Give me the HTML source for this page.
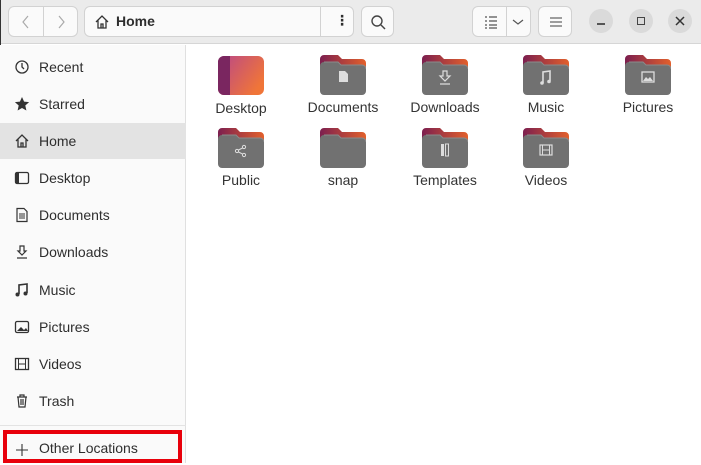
<!DOCTYPE html>
<html><head><meta charset="utf-8"><style>
*{margin:0;padding:0;box-sizing:border-box}
body{width:701px;height:463px;overflow:hidden;background:#fff;font-family:"Liberation Sans","DejaVu Sans",sans-serif;position:relative;color:#2e2e2e}
.hdr{position:absolute;left:0;top:0;width:701px;height:44px;background:#ebebeb;border-bottom:1px solid #d6d6d6}
.btn{position:absolute;background:#fafafa;border:1px solid #d2d2d2;border-radius:6px}
.side{position:absolute;left:0;top:45px;width:186px;height:418px;background:#fafafa;border-right:1px solid #e0e0e0}
.row{position:absolute;left:0;width:186px;height:36px;font-size:14px;line-height:36px}
.row span{position:absolute;left:39px}
.row svg{position:absolute;left:14px;top:10px}
.sel{background:#e3e3e3}
.item{position:absolute;width:100px;text-align:center;font-size:14px;color:#333}
.item svg{display:block;margin:0 auto 4px}
.wc{position:absolute;top:9px;width:24px;height:24px;border-radius:12px;background:#dadada}
</style></head><body>
<svg width="0" height="0" style="position:absolute"><defs>
<linearGradient id="g" x1="0" x2="1"><stop offset="0" stop-color="#7c1f4f"/><stop offset="1" stop-color="#e2602c"/></linearGradient>
<linearGradient id="d" x1="0" x2="1" y1="0" y2="0.6"><stop offset="0" stop-color="#b8468a"/><stop offset="1" stop-color="#f07538"/></linearGradient>
<symbol id="f" viewBox="0 0 46 41"><path d="M0 5a4 4 0 0 1 4-4h14l4 4h20a4 4 0 0 1 4 4v10H0z" fill="url(#g)"/><path d="M0 12a4 4 0 0 1 4-4h14l3 3h21a4 4 0 0 1 4 4v22a4 4 0 0 1-4 4H4a4 4 0 0 1-4-4z" fill="#717171"/><path d="M4 8h14l3 3h21a4 4 0 0 1 4 4" fill="none" stroke="#8a8a8a" stroke-width="1"/></symbol>
</defs></svg>
<div class="hdr"></div>
<div style="position:absolute;left:0;top:0;width:1px;height:463px;background:#333"></div>
<div class="btn" style="left:8px;top:6px;width:70px;height:31px"><div style="position:absolute;left:34px;top:0;width:1px;height:29px;background:#d2d2d2"></div>
<svg style="position:absolute;left:12px;top:8px" width="10" height="14"><path d="M7 1L2 7l5 6" fill="none" stroke="#aaa" stroke-width="1.2"/></svg>
<svg style="position:absolute;left:47px;top:8px" width="10" height="14"><path d="M3 1l5 6-5 6" fill="none" stroke="#aaa" stroke-width="1.2"/></svg></div>
<div class="btn" style="left:84px;top:6px;width:270px;height:31px"><div style="position:absolute;left:235px;top:0;width:1px;height:29px;background:#d2d2d2"></div>
<svg style="position:absolute;left:9px;top:7px" width="16" height="16"><path d="M2 8L8 2l6 6M4 6.5V14h8V6.5M7 14v-4h2v4" fill="none" stroke="#333" stroke-width="1.3"/></svg>
<span style="position:absolute;left:31px;top:6px;font-size:14px;font-weight:bold">Home</span>
<span style="position:absolute;left:250px;top:5px;font-size:14px;font-weight:bold">⋮</span></div>
<div class="btn" style="left:361px;top:6px;width:33px;height:31px"><svg style="position:absolute;left:8px;top:7px" width="16" height="16"><circle cx="7" cy="7" r="5" fill="none" stroke="#444" stroke-width="1.4"/><path d="M11 11l4 4" stroke="#444" stroke-width="1.5"/></svg></div>
<div class="btn" style="left:472px;top:6px;width:59px;height:31px"><div style="position:absolute;left:33px;top:0;width:1px;height:29px;background:#d2d2d2"></div>
<svg style="position:absolute;left:11px;top:8px" width="14" height="14"><path d="M1 2h2M1 6h2M1 10h2M1 13h2M5 2h8M5 6h8M5 10h8M5 13h8" stroke="#555" stroke-width="1.2"/></svg>
<svg style="position:absolute;left:39px;top:11px" width="12" height="8"><path d="M1 2l5 4 5-4" fill="none" stroke="#555" stroke-width="1.2"/></svg></div>
<div class="btn" style="left:538px;top:6px;width:34px;height:31px"><svg style="position:absolute;left:10px;top:9px" width="14" height="12"><path d="M1 2h12M1 6h12M1 10h12" stroke="#666" stroke-width="1.2"/></svg></div>
<div class="wc" style="left:589px"><div style="position:absolute;left:8px;top:14px;width:8px;height:1.5px;background:#555"></div></div>
<div class="wc" style="left:629px"><div style="position:absolute;left:8px;top:8px;width:8px;height:8px;border:1.3px solid #444"></div></div>
<div class="wc" style="left:668px"><svg style="position:absolute;left:7px;top:7px" width="10" height="10"><path d="M1 1l8 8M9 1l-8 8" stroke="#333" stroke-width="1.5"/></svg></div>

<div class="side">
<div class="row" style="top:4px"><svg width="16" height="16"><circle cx="8" cy="8" r="6" fill="none" stroke="#333" stroke-width="1.3"/><path d="M8 4v4l2 2" fill="none" stroke="#333" stroke-width="1.3"/></svg><span>Recent</span></div>
<div class="row" style="top:41px"><svg width="16" height="16"><path d="M8 1l2.1 4.6 5 .5-3.8 3.4 1.1 5L8 12l-4.4 2.5 1.1-5L.9 6.1l5-.5z" fill="#333"/></svg><span>Starred</span></div>
<div class="row sel" style="top:78px"><svg width="16" height="16"><path d="M2 8L8 2l6 6M4 6.5V14h8V6.5M7 14v-4h2v4" fill="none" stroke="#333" stroke-width="1.3"/></svg><span>Home</span></div>
<div class="row" style="top:115px"><svg width="16" height="16"><rect x="1.5" y="2.5" width="13" height="11" rx="1.5" fill="none" stroke="#333" stroke-width="1.3"/><rect x="2" y="3" width="3" height="10" fill="#333"/></svg><span>Desktop</span></div>
<div class="row" style="top:152px"><svg width="16" height="16"><path d="M3 1.5h7l3 3v10H3z" fill="none" stroke="#333" stroke-width="1.2"/><path d="M5 7h6M5 9h6M5 11h6" stroke="#333"/></svg><span>Documents</span></div>
<div class="row" style="top:189px"><svg width="16" height="16"><path d="M6 2h4v5h2l-4 4-4-4h2zM3 14h10" fill="none" stroke="#333" stroke-width="1.2"/></svg><span>Downloads</span></div>
<div class="row" style="top:227px"><svg width="16" height="16"><path d="M5 12V3l8-1v9" fill="none" stroke="#333" stroke-width="1.6"/><circle cx="3.5" cy="12.5" r="2" fill="#333"/><circle cx="11.5" cy="11.5" r="2" fill="#333"/></svg><span>Music</span></div>
<div class="row" style="top:264px"><svg width="16" height="16"><rect x="1.5" y="2.5" width="13" height="11" rx="1.5" fill="none" stroke="#333" stroke-width="1.3"/><path d="M3 12l4-4 3 3 2-2 2 3z" fill="#333"/></svg><span>Pictures</span></div>
<div class="row" style="top:301px"><svg width="16" height="16"><rect x="1.5" y="2.5" width="13" height="11" fill="none" stroke="#333" stroke-width="1.3"/><path d="M4.5 3v10M11.5 3v10M5 8h6" stroke="#333"/></svg><span>Videos</span></div>
<div class="row" style="top:338px"><svg width="16" height="16"><path d="M3 4h10M6 4V2h4v2M4 4l1 10h6l1-10M7 6v6M9 6v6" fill="none" stroke="#333" stroke-width="1.2"/></svg><span>Trash</span></div>
<div style="position:absolute;left:0;top:380px;width:186px;height:1px;background:#e3e3e3"></div>
<div class="row" style="top:386px;height:32px;line-height:34px"><svg width="16" height="16" style="top:11px"><path d="M8 2v12M2 8h12" stroke="#333" stroke-width="1.1"/></svg><span>Other Locations</span></div>
</div>
<div style="position:absolute;left:3px;top:430px;width:179px;height:33px;border:4px solid #e8000b"></div>

<div class="item" style="left:191px;top:55px"><svg width="46" height="41"><rect x="0" y="1" width="46" height="39" rx="6" fill="url(#d)"/><path d="M6 1h6v39H6a6 6 0 0 1-6-6V7a6 6 0 0 1 6-6z" fill="#7a2660"/></svg>Desktop</div>
<div class="item" style="left:293px;top:54px"><svg width="46" height="41"><use href="#f"/><path d="M19 17h6l3 3v8h-9z" fill="#ddd"/></svg>Documents</div>
<div class="item" style="left:395px;top:54px"><svg width="46" height="41"><use href="#f"/><path d="M21 17h4v5h3l-5 5-5-5h3zM18 30h10" fill="none" stroke="#ddd" stroke-width="1.2"/></svg>Downloads</div>
<div class="item" style="left:496px;top:54px"><svg width="46" height="41"><use href="#f"/><path d="M20 29v-11l7-1v10" fill="none" stroke="#ddd" stroke-width="1.6"/><circle cx="19" cy="29" r="1.8" fill="#ddd"/><circle cx="26" cy="27.5" r="1.8" fill="#ddd"/></svg>Music</div>
<div class="item" style="left:598px;top:54px"><svg width="46" height="41"><use href="#f"/><rect x="17" y="18" width="12" height="10" fill="none" stroke="#ddd" stroke-width="1.3"/><path d="M18 27l3-4 2 2 2-2 3 4z" fill="#ddd"/></svg>Pictures</div>
<div class="item" style="left:191px;top:127px"><svg width="46" height="41"><use href="#f"/><circle cx="19" cy="24" r="1.6" fill="none" stroke="#ddd"/><circle cx="26" cy="20" r="1.6" fill="none" stroke="#ddd"/><circle cx="26" cy="28" r="1.6" fill="none" stroke="#ddd"/><path d="M20.5 23l4-2M20.5 25l4 2" stroke="#ddd"/></svg>Public</div>
<div class="item" style="left:293px;top:127px"><svg width="46" height="41"><use href="#f"/></svg>snap</div>
<div class="item" style="left:395px;top:127px"><svg width="46" height="41"><use href="#f"/><rect x="19" y="17" width="3" height="12" fill="#ddd"/><rect x="23.5" y="17" width="3" height="12" fill="none" stroke="#ddd"/></svg>Templates</div>
<div class="item" style="left:496px;top:127px"><svg width="46" height="41"><use href="#f"/><rect x="17" y="18" width="12" height="10" fill="none" stroke="#ddd" stroke-width="1.2"/><path d="M19.5 18v10M26.5 18v10M20 23h6" stroke="#ddd"/></svg>Videos</div>
</body></html>
